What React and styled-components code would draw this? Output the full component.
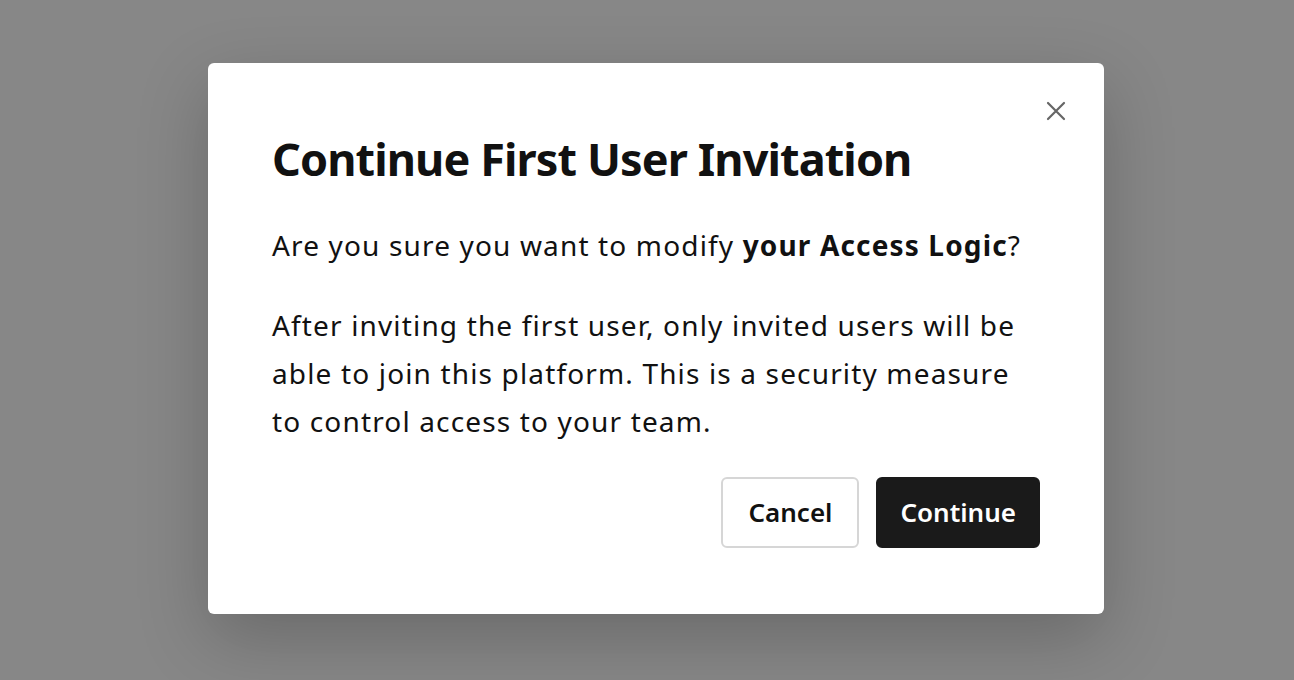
import React from 'react'
import styled, { createGlobalStyle } from 'styled-components'

const Global = createGlobalStyle`
  html, body {
    margin: 0;
    padding: 0;
    background: #878787;
    font-family: "Noto Sans", "Open Sans", sans-serif;
  }
`

const Overlay = styled.div`
  height: 680px;
  display: flex;
  align-items: center;
  justify-content: center;
  padding-left: 18px;
  padding-bottom: 4px;
  box-sizing: border-box;
  background: #878787;
`

const Modal = styled.div`
  position: relative;
  width: 896px;
  box-sizing: border-box;
  padding: 64px 64px 66px;
  background: #fff;
  border-radius: 6px;
  box-shadow: 0 24px 70px rgba(0, 0, 0, 0.22);
`

const Close = styled.button`
  position: absolute;
  top: 36px;
  right: 36px;
  width: 24px;
  height: 24px;
  padding: 0;
  border: none;
  background: none;
  color: #666;
  cursor: pointer;
  display: flex;
  align-items: center;
  justify-content: center;
`

const Title = styled.h1`
  margin: 0 0 30px;
  font-size: 45px;
  line-height: 64px;
  font-weight: 700;
  color: #111;
  letter-spacing: -0.9px;
`

const Text = styled.p`
  margin: 0 0 32px;
  font-size: 28px;
  line-height: 48px;
  letter-spacing: 1.15px;
  color: #111;
`

const Actions = styled.div`
  display: flex;
  justify-content: flex-end;
  gap: 17px;
  margin-top: 12px;
`

const Button = styled.button`
  height: 71px;
  padding: 0 ${p => (p.primary ? '22px' : '25px')};
  border-radius: 6px;
  font-family: inherit;
  font-size: 26px;
  font-weight: 600;
  cursor: pointer;
  border: 2px solid ${p => (p.primary ? '#1a1a1a' : '#d6d6d6')};
  background: ${p => (p.primary ? '#1a1a1a' : '#fff')};
  color: ${p => (p.primary ? '#fff' : '#111')};
`

const App = () => {
  return (
    <Overlay>
      <Global />
      <Modal>
        <Close aria-label="Close">
          <svg width="22" height="22" viewBox="0 0 22 22" fill="none" stroke="currentColor" strokeWidth="2.2" strokeLinecap="round">
            <path d="M3 3 L19 19 M19 3 L3 19" />
          </svg>
        </Close>
        <Title>Continue First User Invitation</Title>
        <Text>
          Are you sure you want to modify <b>your Access Logic</b>?
        </Text>
        <Text>
          After inviting the first user, only invited users will be able to join this platform. This is a security measure to control access to your team.
        </Text>
        <Actions>
          <Button>Cancel</Button>
          <Button primary>Continue</Button>
        </Actions>
      </Modal>
    </Overlay>
  )
}

export default App
